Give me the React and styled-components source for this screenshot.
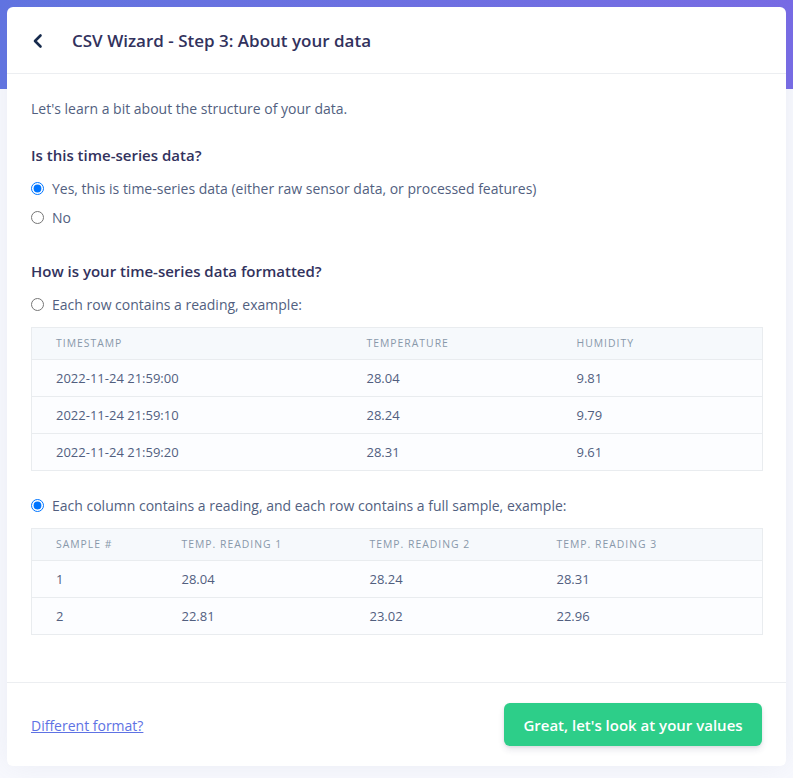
import React from 'react';
import styled, { createGlobalStyle } from 'styled-components';

const GlobalStyle = createGlobalStyle`
    html, body {
        margin: 0;
        padding: 0;
    }

    body {
        font-family: "Open Sans", "Noto Sans", sans-serif;
        color: #525f7f;
        font-size: 14px;
        background: #f8f9fe;
    }
`;

const rowFormat = {
    widths: [311, 210, 210],
    headers: ['Timestamp', 'Temperature', 'Humidity'],
    rows: [
        ['2022-11-24 21:59:00', '28.04', '9.81'],
        ['2022-11-24 21:59:10', '28.24', '9.79'],
        ['2022-11-24 21:59:20', '28.31', '9.61']
    ]
};

const columnFormat = {
    widths: [126, 188, 187, 230],
    headers: ['Sample #', 'Temp. reading 1', 'Temp. reading 2', 'Temp. reading 3'],
    rows: [
        ['1', '28.04', '28.24', '28.31'],
        ['2', '22.81', '23.02', '22.96']
    ]
};

function ChevronLeft(){
    return (
        <svg width="14" height="16" viewBox="0 0 14 16" fill="none">
            <path d="M9.5 2.5 L4 8 L9.5 13.5" stroke="#172b4d" strokeWidth="2.6" strokeLinecap="round" strokeLinejoin="round" />
        </svg>
    );
}

function ExampleTable({ data }){
    return (
        <StyledTable>
            <colgroup>
                {data.widths.map((w, i) => <col key={i} style={{ width: w }} />)}
            </colgroup>
            <thead>
                <tr>
                    {data.headers.map((h, i) => <Th key={i}>{h}</Th>)}
                </tr>
            </thead>
            <tbody>
                {data.rows.map((row, r) => (
                    <tr key={r}>
                        {row.map((cell, c) => <Td key={c}>{cell}</Td>)}
                    </tr>
                ))}
            </tbody>
        </StyledTable>
    );
}

export default function App(){

    return (
        <Page>
            <GlobalStyle />
            <Card>
                <CardHeader>
                    <BackButton><ChevronLeft /></BackButton>
                    <Title>CSV Wizard - Step 3: About your data</Title>
                </CardHeader>

                <CardBody>
                    <Intro>Let's learn a bit about the structure of your data.</Intro>

                    <Question>Is this time-series data?</Question>
                    <RadioGroup>
                        <RadioLabel>
                            <input type="radio" name="ts" defaultChecked />
                            Yes, this is time-series data (either raw sensor data, or processed features)
                        </RadioLabel>
                        <RadioLabel>
                            <input type="radio" name="ts" />
                            No
                        </RadioLabel>
                    </RadioGroup>

                    <Question $spaced>How is your time-series data formatted?</Question>
                    <RadioLabel>
                        <input type="radio" name="fmt" />
                        Each row contains a reading, example:
                    </RadioLabel>
                    <ExampleTable data={rowFormat} />

                    <RadioLabel $top={24}>
                        <input type="radio" name="fmt" defaultChecked />
                        Each column contains a reading, and each row contains a full sample, example:
                    </RadioLabel>
                    <ExampleTable data={columnFormat} />
                </CardBody>

                <CardFooter>
                    <FooterLink href="#">Different format?</FooterLink>
                    <SuccessButton>Great, let's look at your values</SuccessButton>
                </CardFooter>
            </Card>
        </Page>
    );
}

const Page = styled.div`
    min-height: 778px;
    box-sizing: border-box;
    padding: 7px 7px 12px;
    background:
        linear-gradient(90deg, #6073e2 0%, #776ae6 100%) top left / 100% 89px no-repeat,
        #f8f9fe;
`;

const Card = styled.div`
    background: #fff;
    border-radius: 6px;
    box-shadow: 0 0 2rem 0 rgba(136, 152, 170, 0.12);
    display: flex;
    flex-direction: column;
`;

const CardHeader = styled.div`
    height: 67px;
    box-sizing: border-box;
    display: flex;
    align-items: center;
    padding: 0 24px;
    border-bottom: 1px solid #eceef1;
`;

const BackButton = styled.span`
    display: flex;
    align-items: center;
    width: 41px;
    margin-top: 1px;
`;

const Title = styled.h3`
    margin: 0;
    font-size: 17px;
    font-weight: 600;
    color: #32325d;
`;

const CardBody = styled.div`
    padding: 24px 24px 47px;
    line-height: 21px;
`;

const Intro = styled.p`
    margin: 0 0 25px;
`;

const Question = styled.h4`
    margin: ${p => p.$spaced ? '32px' : '0'} 0 12px;
    font-size: 15px;
    font-weight: 600;
    line-height: 22px;
    color: #32325d;
`;

const RadioGroup = styled.div`
    display: flex;
    flex-direction: column;
    gap: 8px;
`;

const RadioLabel = styled.label`
    display: flex;
    align-items: center;
    gap: 8px;
    margin-top: ${p => p.$top || 0}px;

    input {
        margin: 0;
        width: 13px;
        height: 13px;
    }
`;

const StyledTable = styled.table`
    width: 100%;
    table-layout: fixed;
    border-collapse: collapse;
    margin-top: 12px;
    border: 1px solid #e9ecef;
`;

const Th = styled.th`
    text-align: left;
    background: #f6f9fc;
    color: #8898aa;
    font-size: 10.4px;
    font-weight: 400;
    letter-spacing: 1px;
    text-transform: uppercase;
    padding: 10px 24px;
    line-height: 11px;
    border-bottom: 1px solid #e9ecef;
`;

const Td = styled.td`
    background: #fcfdff;
    padding: 8px 24px;
    line-height: 20px;
    font-size: 13px;
    border-top: 1px solid #e9ecef;
`;

const CardFooter = styled.div`
    height: 84px;
    box-sizing: border-box;
    display: flex;
    align-items: center;
    justify-content: space-between;
    padding: 0 24px;
    border-top: 1px solid #eceef1;
`;

const FooterLink = styled.a`
    color: #5e72e4;
    text-decoration: underline;
    margin-top: 1px;
`;

const SuccessButton = styled.button`
    height: 43px;
    width: 258px;
    border: none;
    border-radius: 6px;
    background: #2dce89;
    color: #fff;
    font-family: inherit;
    font-size: 15px;
    font-weight: 600;
    box-shadow: 0 4px 6px rgba(50, 50, 93, 0.11), 0 1px 3px rgba(0, 0, 0, 0.08);
    cursor: pointer;
`;
